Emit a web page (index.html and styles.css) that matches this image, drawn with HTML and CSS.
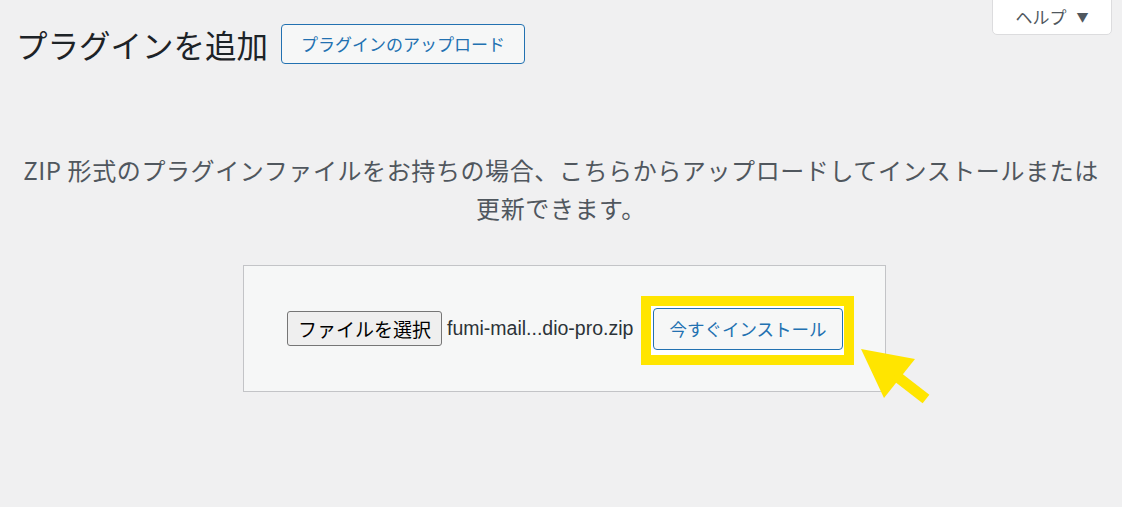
FILE: index.html
```html
<!DOCTYPE html>
<html lang="ja">
<head>
<meta charset="utf-8">
<title>プラグインを追加</title>
<link rel="stylesheet" href="styles.css">
</head>
<body>
<div class="page">
  <div class="top-row">
    <div class="title-group">
      <h1 class="page-title">プラグインを追加</h1>
      <button class="upload-toggle" type="button">プラグインのアップロード</button>
    </div>
    <button class="help-tab" type="button">ヘルプ <span class="help-caret">▼</span></button>
  </div>

  <div class="upload-plugin">
    <p class="install-help">ZIP 形式のプラグインファイルをお持ちの場合、こちらからアップロードしてインストールまたは更新できます。</p>
    <div class="form-row">
      <form class="upload-form">
        <div class="file-picker">
          <span class="file-button">ファイルを選択</span>
          <span class="file-name">fumi-mail...dio-pro.zip</span>
        </div>
        <div class="install-wrap">
          <span class="highlight-frame"></span>
          <button class="install-button" type="button">今すぐインストール</button>
          <svg class="pointer-arrow" width="80" height="60" viewBox="0 0 80 60" aria-hidden="true">
            <polygon points="8,1 62,11 31,50" fill="#ffe500"/>
            <line x1="42" y1="27" x2="73" y2="51" stroke="#ffe500" stroke-width="11"/>
          </svg>
        </div>
      </form>
    </div>
  </div>
</div>
</body>
</html>
```
FILE: styles.css
```css
* { box-sizing: border-box; }

html, body {
  margin: 0;
  padding: 0;
  background: #f0f0f1;
}

body {
  font-family: "Noto Sans CJK JP", "Noto Sans", sans-serif;
  color: #1d2327;
  width: 1122px;
  height: 507px;
  overflow: hidden;
}

.top-row {
  display: flex;
  align-items: flex-start;
  padding: 0 10px 0 16px;
}

.title-group {
  display: flex;
  align-items: center;
  margin-top: 24px;
}

.page-title {
  margin: 0;
  font-size: 31.5px;
  font-weight: 400;
  line-height: 40px;
  color: #1d2327;
}

.upload-toggle {
  margin-left: 13px;
  height: 40px;
  padding: 0 19px;
  font-family: inherit;
  font-size: 17px;
  line-height: 38px;
  color: #2271b1;
  background: #f6f7f7;
  border: 1px solid #2271b1;
  border-radius: 4px;
}

.help-tab {
  margin-left: auto;
  width: 120px;
  height: 36px;
  margin-top: -1px;
  padding: 0 0 2px;
  font-family: inherit;
  font-size: 17px;
  color: #50575e;
  background: #fff;
  border: 1px solid #dcdcde;
  border-radius: 0 0 5px 5px;
}

.help-caret {
  font-size: 12px;
  margin-left: 6px;
  position: relative;
  top: -2px;
}

.upload-plugin {
  padding: 0 16px;
}

.install-help {
  margin: 87px 0 0;
  font-size: 24px;
  letter-spacing: 0.6px;
  line-height: 38px;
  text-align: center;
  color: #50575e;
}

.form-row {
  display: flex;
  justify-content: center;
  padding-left: 7px;
  margin-top: 38px;
}

.upload-form {
  display: flex;
  align-items: center;
  width: 643px;
  height: 127px;
  padding: 0 42px 0 43px;
  background: #f6f7f7;
  border: 1px solid #c3c4c7;
}

.file-picker {
  display: flex;
  align-items: center;
}

.file-button {
  display: inline-flex;
  align-items: center;
  justify-content: center;
  width: 155px;
  height: 35px;
  font-size: 19px;
  color: #000;
  background: #efefef;
  border: 1px solid #767676;
  border-radius: 3px;
}

.file-name {
  width: 189px;
  margin-left: 5px;
  white-space: nowrap;
  font-family: "Liberation Sans", Arial, sans-serif;
  font-size: 19.5px;
  color: #2c3338;
}

.install-wrap {
  position: relative;
  margin-left: 17px;
}

.install-button {
  position: relative;
  z-index: 2;
  display: block;
  width: 190px;
  height: 42px;
  padding: 0;
  font-family: inherit;
  font-size: 17.5px;
  color: #2271b1;
  background: #f6f7f7;
  border: 1px solid #2271b1;
  border-radius: 4px;
}

.highlight-frame {
  position: absolute;
  z-index: 1;
  left: -12px;
  top: -12px;
  width: 213px;
  height: 69px;
  border: 10px solid #ffe500;
  background: #fff;
}

.pointer-arrow {
  position: absolute;
  z-index: 3;
  left: 200px;
  top: 40px;
}
```
